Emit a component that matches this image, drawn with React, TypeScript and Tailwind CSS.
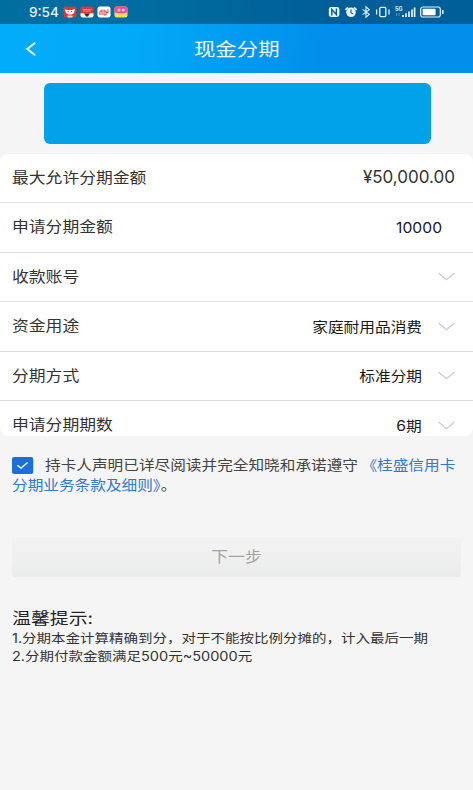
import React from "react";

const rows = [
  { label: "最大允许分期金额", value: "¥50,000.00", kind: "amount" },
  { label: "申请分期金额", value: "10000", kind: "input" },
  { label: "收款账号", value: "", kind: "select" },
  { label: "资金用途", value: "家庭耐用品消费", kind: "select" },
  { label: "分期方式", value: "标准分期", kind: "select" },
  { label: "申请分期期数", value: "6期", kind: "select" },
];

const AppBadges = () => (
  <svg width="66" height="12" viewBox="0 0 66 12" className="ml-[3px]">
    <rect x="0.5" y="0.5" width="13" height="11" rx="2" fill="#d9393a" />
    <path d="M1.5 3.2 4 4h5l3-1.2-.8 3.6C10 9.2 4.5 9.4 3 6.6Z" fill="#fff" />
    <path d="M4.5 9.5h5v2h-5z" fill="#f3d7d0" />
    <circle cx="5.2" cy="5.6" r="0.7" fill="#444" />
    <circle cx="8.6" cy="5.6" r="0.7" fill="#444" />
    <rect x="17.5" y="0.5" width="13" height="11" rx="2" fill="#e2353a" />
    <path d="M19.5 3.5h9M20 5h8" stroke="#f39a92" strokeWidth="0.8" />
    <path d="M17.5 7.2h3.5l1 1.3h4l1-1.3h3.5v2.3a2 2 0 0 1-2 2h-9a2 2 0 0 1-2-2Z" fill="#f7f0ef" />
    <path d="M21.5 8h5L25 10.5h-2Z" fill="#333" />
    <rect x="34.5" y="0.5" width="13" height="11" rx="2" fill="#fff" />
    <path
      d="M37 9V5M39 9V3.5M37 5h2M41 9V3.5M41 5h2v4M45 3.5v3h-2M41 9h2"
      fill="none"
      stroke="#d84b4d"
      strokeWidth="1.1"
    />
    <rect x="51.5" y="0.5" width="13" height="11" rx="2" fill="#f9d95b" />
    <path d="M51.5 6V2.5a2 2 0 0 1 2-2h9a2 2 0 0 1 2 2V6l-3 1.3h-7Z" fill="#ec4f9a" />
    <circle cx="56" cy="4" r="1.6" fill="#f8b7d3" />
    <circle cx="60.3" cy="4" r="1.6" fill="#f8b7d3" />
  </svg>
);

const StatusIcons = () => (
  <svg width="118" height="14" viewBox="0 0 118 14" fill="none" stroke="#e9f4fb">
    {/* nfc */}
    <rect x="0.8" y="2" width="10.6" height="10" rx="2.4" fill="#e9f4fb" stroke="none" />
    <path d="M3.8 10.5V4.3l4.6 5.4V3.5" stroke="#045e93" strokeWidth="1.4" />
    {/* alarm */}
    <circle cx="23" cy="7.3" r="4.8" fill="#e9f4fb" stroke="none" />
    <path d="M17.4 4.8 20 2.4M28.6 4.8 26 2.4" strokeWidth="1.7" />
    <path d="M23 4.6v3l2 1.2" stroke="#045e93" strokeWidth="1.1" />
    {/* bluetooth */}
    <path d="m34.6 4.4 6.6 5-3.2 2.8V1.8l3.2 2.8-6.6 5" strokeWidth="1.1" />
    {/* vibrate */}
    <rect x="51.8" y="2.4" width="6" height="9.2" rx="1" strokeWidth="1.3" />
    <path d="M48.6 4.5v5M61 4.5v5" strokeWidth="1.3" />
    {/* signal */}
    <text x="67" y="5.6" fontSize="5.5" fontWeight="700" fill="#e9f4fb" stroke="none" fontFamily="Inter, sans-serif">
      5G
    </text>
    <path d="M68.5 8v3M71 8v3" stroke="#4f9bd0" strokeWidth="1" />
    <path d="M75 12v-2M78 12V8.3M81 12V6.4M84 12V4.4M86.6 12V2.4" strokeWidth="1.7" />
    {/* battery */}
    <rect x="92.7" y="2" width="19.6" height="10" rx="2.2" strokeWidth="1.2" />
    <rect x="94.6" y="3.8" width="13" height="6.4" rx="0.6" fill="#fff" stroke="none" />
    <path d="M114.8 5v4" strokeWidth="1.5" />
  </svg>
);

const Header = () => (
  <header className="h-[73px] bg-linear-[100deg,#03acf9_0%,#02a9f8_30%,#018feb_68%,#018feb_100%]">
    <div className="flex h-6 items-center justify-between bg-[#003048]/50 pl-[29px] pr-[27px]">
      <div className="flex items-center">
        <span className="w-[31px] text-[13.5px] font-medium leading-6 text-[#e9f6fa]">9:54</span>
        <AppBadges />
      </div>
      <StatusIcons />
    </div>
    <div className="grid h-[49px] grid-cols-3 items-center">
      <svg width="12" height="16" viewBox="0 0 12 16" className="ml-[25px]">
        <path d="M10.2 1.8 2.2 8l8 6.2" fill="none" stroke="#e6f7ff" strokeWidth="2" />
      </svg>
      <h1 className="scale-x-[1.16] whitespace-nowrap text-center text-[18.5px] leading-6 text-[#eefaff]">
        现金分期
      </h1>
    </div>
  </header>
);

const Chevron = () => (
  <svg width="17" height="9" viewBox="0 0 17 9" className="ml-4 shrink-0">
    <path d="M0.5 1 8.5 7.8 16.5 1" fill="none" stroke="#cbcbcb" strokeWidth="1.2" />
  </svg>
);

const Row = ({ label, value, kind }: { label: string; value: string; kind: string }) => (
  <div
    className={`flex h-[49.4px] shrink-0 items-center justify-between border-b border-[#dedede] pl-3 ${
      kind === "input" ? "pr-[31px]" : "pr-[18px]"
    }`}
  >
    <span className="origin-left scale-x-[1.12] text-[15px] text-[#333]">{label}</span>
    <div className="flex items-center">
      {kind === "amount" ? (
        <span className="text-[17px] text-[#333]">{value}</span>
      ) : (
        <span className="origin-right scale-x-[1.12] text-[14px] text-[#1a1a1a]">{value}</span>
      )}
      {kind === "select" && <Chevron />}
    </div>
  </div>
);

const App = () => {
  return (
    <main className="h-[790px] w-[473px] overflow-hidden bg-[#f5f5f5] font-[Inter,'Noto_Sans_CJK_SC',sans-serif]">
      <Header />
      <div className="ml-11 mt-[10px] h-[61px] w-[387px] rounded-md bg-[#01a2e9]" />
      <section className="mt-[10px] flex h-[282px] flex-col overflow-hidden rounded-lg bg-white">
        {rows.map(row => (
          <Row key={row.label} {...row} />
        ))}
      </section>

      <section className="ml-3 mt-[19px] w-[420px] origin-left scale-x-[1.118] whitespace-nowrap text-[14px] leading-5 text-[#444]">
        <div className="flex items-center">
          <span className="mr-[11px] flex h-[17px] w-[18.5px] items-center justify-center rounded-[2px] bg-[#1a6fdc]">
            <svg width="11" height="9" viewBox="0 0 11 9">
              <path d="m0.8 4.2 3.2 3L10.2 1.2" fill="none" stroke="#fff" strokeWidth="1.3" />
            </svg>
          </span>
          <span>持卡人声明已详尽阅读并完全知晓和承诺遵守</span>
          <span className="ml-[3px] text-[#3379c8]">《桂盛信用卡</span>
        </div>
        <div>
          <span className="text-[#3379c8]">分期业务条款及细则》</span>。
        </div>
      </section>

      <button className="ml-3 mt-[42px] block h-10 w-[449px] rounded bg-linear-to-b from-[#f2f2f2] via-[#f0f0f0] to-[#eaebeb] text-[15px] text-[#a3a3a3]">
        <span className="inline-block scale-x-[1.12]">下一步</span>
      </button>

      <section className="ml-3 mt-[29px] whitespace-nowrap text-[#333]">
        <h2 className="origin-left scale-x-[1.18] text-[16px] leading-6 text-[#222]">温馨提示:</h2>
        <p className="origin-left scale-x-[1.16] text-[12.5px] leading-[18px]">
          1.分期本金计算精确到分，对于不能按比例分摊的，计入最后一期
        </p>
        <p className="origin-left scale-x-[1.16] text-[12.5px] leading-[18px]">2.分期付款金额满足500元~50000元</p>
      </section>
    </main>
  );
};

export default App;
